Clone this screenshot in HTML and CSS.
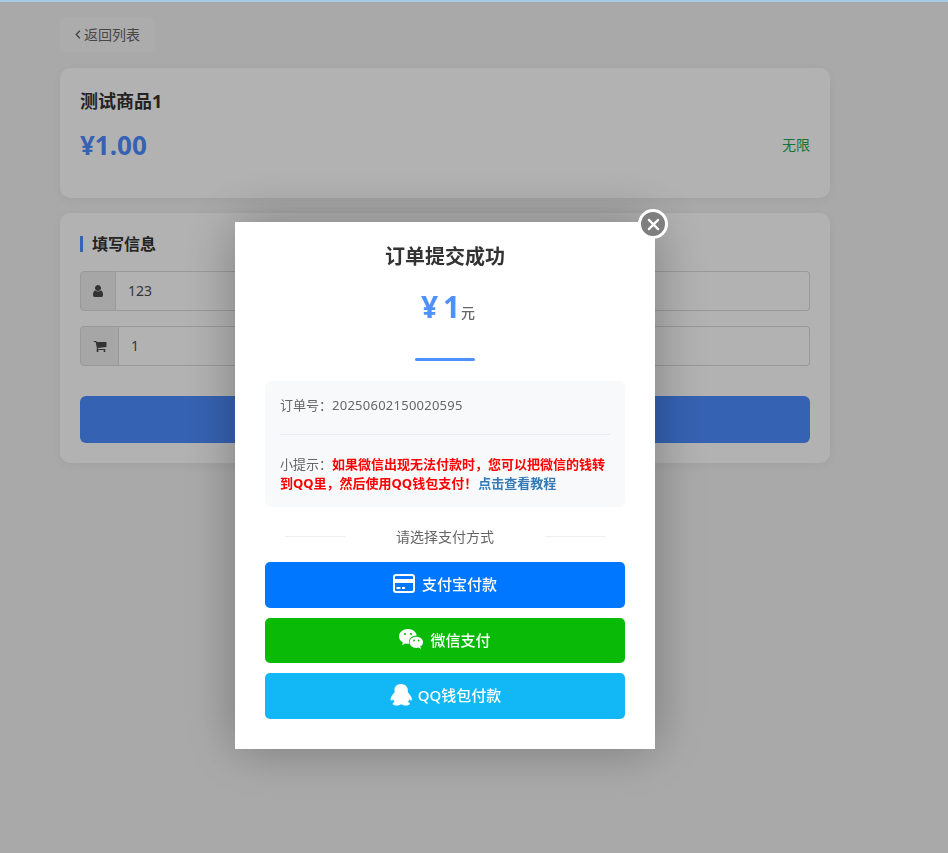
FILE: index.html
```html
<!DOCTYPE html>
<html lang="zh">
<head>
<meta charset="utf-8">
<title>订单提交成功</title>
<link rel="stylesheet" href="styles.css">
</head>
<body>
<div class="topline"></div>
<main class="page">
  <a class="back"><svg class="chev" viewBox="0 0 6 9"><path d="M4.800 .8L1.300 4.500l3.500 3.700"/></svg>返回列表</a>
  <section class="card product">
    <h1 class="product-name">测试商品1</h1>
    <div class="price-row">
      <span class="price">¥1.00</span>
      <span class="stock">无限</span>
    </div>
  </section>
  <section class="card form">
    <h2 class="section-title">填写信息</h2>
    <div class="field">
      <span class="prepend user">
        <svg class="fa" viewBox="0 0 1792 1792"><path d="M1536 1399q0 109-62.5 187t-150.5 78h-854q-88 0-150.5-78t-62.5-187q0-85 8.5-160.5t31.5-152 58.5-131 94-89 134.5-34.5q131 128 313 128t313-128q76 0 134.5 34.5t94 89 58.5 131 31.5 152 8.5 160.5zm-256-887q0 159-112.5 271.5t-271.5 112.5-271.5-112.5-112.5-271.5 112.5-271.5 271.5-112.5 271.5 112.5 112.5 271.5z"/></svg>
      </span>
      <input class="control" value="123">
    </div>
    <div class="field">
      <span class="prepend cart">
        <svg class="fa" viewBox="0 0 1792 1792"><path d="M704 1536q0 52-38 90t-90 38-90-38-38-90 38-90 90-38 90 38 38 90zm896 0q0 52-38 90t-90 38-90-38-38-90 38-90 90-38 90 38 38 90zm128-1088v512q0 24-16.5 43.5t-40.5 22.5l-1044 122q13 60 13 70 0 16-24 64h920q26 0 45 19t19 45-19 45-45 19h-1024q-26 0-45-19t-19-45q0-11 8-31.5t16-36 21.5-40 15.5-29.5l-177-823h-204q-26 0-45-19t-19-45 19-45 45-19h256q16 0 28.5 6.5t19.5 15.5 13 24.5 8 26 5.5 29.5 4.5 26h1201q26 0 45 19t19 45z"/></svg>
      </span>
      <input class="control" value="1">
    </div>
    <button class="submit">提交订单</button>
  </section>
</main>

<div class="overlay"></div>

<div class="modal">
  <button class="close" aria-label="关闭">
    <svg viewBox="0 0 14 14"><path d="M2 2l10 10M12 2L2 12"/></svg>
  </button>
  <h3 class="modal-title">订单提交成功</h3>
  <div class="amount"><b>¥ 1</b><small>元</small></div>
  <div class="rule"></div>
  <div class="info">
    <p class="order">订单号：<span class="num">20250602150020595</span></p>
    <hr class="sep">
    <p class="tip">小提示：<strong>如果微信出现无法付款时，您可以把微信的钱转到QQ里，然后使用QQ钱包支付！</strong><a>点击查看教程</a></p>
  </div>
  <div class="choose"><span>请选择支付方式</span></div>
  <div class="pays">
    <a class="pay alipay">
      <svg class="ico card-ico" viewBox="0 0 22 19"><rect x="1" y="1" width="20" height="17" rx="2.2" fill="none" stroke="#fff" stroke-width="2"/><rect x="1" y="5" width="20" height="4" fill="#fff"/><rect x="3.500" y="13" width="4" height="2" fill="#fff"/><rect x="9" y="13" width="3" height="2" fill="#fff"/></svg>
      支付宝付款
    </a>
    <a class="pay wechat">
      <svg class="ico wx-ico" viewBox="0 0 24 20"><path fill="#fff" d="M9 0c4.600 0 8.400 2.900 8.700 6.600C13.600 6.500 10 9.300 10 13c0 .6.100 1.100.3 1.700-.5.100-.9.100-1.300.1-1 0-1.900-.1-2.800-.4L3 16.200l.9-2.800C1.500 12 0 9.900 0 7.400 0 3.300 4 0 9 0z"/><path fill="#fff" d="M17.300 7.800c3.700 0 6.700 2.400 6.700 5.400 0 1.800-1.100 3.300-2.700 4.400l.7 2.400-2.700-1.400c-.7.2-1.300.3-2 .3-3.700 0-6.700-2.500-6.700-5.700 0-3 3-5.400 6.700-5.400z"/><circle cx="6" cy="5" r="1.100" fill="#09bb07"/><circle cx="12" cy="5" r="1.100" fill="#09bb07"/><circle cx="15" cy="11.500" r=".9" fill="#09bb07"/><circle cx="19.600" cy="11.500" r=".9" fill="#09bb07"/></svg>
      微信支付
    </a>
    <a class="pay qq">
      <svg class="ico qq-ico" viewBox="0 0 22 22" preserveAspectRatio="none"><path fill="#fff" d="M11 0c3.900 0 6.300 2.900 6.300 6.600 0 .6 0 1.200-.1 1.600 1.100 1.200 2.500 3 3.200 4.700.8 1.900.7 3.600.1 3.700-.5.100-1.200-.5-1.800-1.400-.2 1-.8 2-1.500 2.700 1 .4 1.900 1 1.900 1.800 0 1.100-1.800 1.800-3.800 1.800-1.300 0-2.600-.4-3.300-1-.2 0-.5 0-.8 0s-.6 0-.8 0c-.7.600-2 1-3.300 1-2 0-3.800-.7-3.800-1.800 0-.8.900-1.400 1.900-1.800-.7-.7-1.300-1.700-1.500-2.700-.6.900-1.300 1.500-1.800 1.400-.6-.1-.7-1.800.1-3.700.7-1.700 2.100-3.500 3.200-4.700-.1-.4-.1-1-.1-1.600C4.700 2.900 7.100 0 11 0z"/></svg>
      QQ钱包付款
    </a>
  </div>
</div>
</body>
</html>
```

FILE: styles.css
```css
* { box-sizing: border-box; }
html, body { margin: 0; height: 100%; }
body {
  background: #f3f3f3;
  font-family: "Noto Sans", "Noto Sans CJK SC", sans-serif;
  font-size: 14px;
  color: #333;
  overflow: hidden;
}
.topline {
  position: fixed; top: 0; left: 0; right: 0; height: 2px;
  background: #a6cbe3; z-index: 30;
}
.page { width: 770px; margin-left: 60px; padding-top: 18px; }
.back {
  display: flex; align-items: center; width: 95px; height: 34px; padding: 0 0 2px 15px;
  background: #f6f7f8; border-radius: 6px; color: #666; font-size: 14px;
}
.chev { width: 6px; height: 9px; margin-right: 3px; fill: none; stroke: #666; stroke-width: 1.400; }
.card {
  background: #fff; border-radius: 10px; padding: 20px;
  box-shadow: 0 2px 12px rgba(0,0,0,.06);
}
.product { height: 130px; margin-top: 16px; }
.product-name { margin: 0; font-size: 18px; line-height: 27px; font-weight: 700; color: #333; }
.price-row { display: flex; justify-content: space-between; align-items: center; margin-top: 12px; }
.price { font-size: 26px; line-height: 36px; font-weight: 700; color: #4d8dff; }
.stock { color: #28a745; font-size: 14px; margin-bottom: 2px; }
.form { height: 250px; margin-top: 15px; }
.section-title {
  margin: 0 0 16px; font-size: 16px; line-height: 22px; font-weight: 700; color: #333;
  display: flex; align-items: center;
}
.section-title::before {
  content: ""; width: 3px; height: 16px; background: #4d8dff; margin-right: 9px;
}
.field { display: flex; height: 40px; margin-bottom: 15px; }
.prepend {
  display: flex; align-items: center; justify-content: center;
  background: #eeeeee; border: 1px solid #dcdcdc; border-radius: 4px 0 0 4px;
}
.user { width: 36px; }
.cart { width: 39px; }
.fa { width: 14px; height: 14px; fill: #4a4a4a; }
.control {
  flex: 1; min-width: 0; height: 40px; border: 1px solid #dcdcdc; border-left: 0;
  border-radius: 0 4px 4px 0; padding: 0 12px 2px; background: #fff; color: #495057;
  font: 14px "Noto Sans", "Noto Sans CJK SC", sans-serif; outline: 0;
}
.submit {
  display: block; width: 100%; height: 47px; margin-top: 30px; border: 0; border-radius: 6px;
  background: #4d8dff; color: #fff; font: 700 16px "Noto Sans CJK SC", sans-serif;
}
.overlay { position: fixed; inset: 0; background: rgba(0,0,0,.3); z-index: 10; }
.modal {
  position: fixed; left: 235px; top: 222px; width: 420px; height: 527px;
  background: #fff; z-index: 20; padding: 0 30px;
  box-shadow: 0 0 50px rgba(0,0,0,.3);
}
.close {
  position: absolute; right: -13px; top: -13px; width: 30px; height: 30px; padding: 0;
  border-radius: 50%; border: 3px solid #fff; background: #7f7f7f;
  display: flex; align-items: center; justify-content: center;
}
.close svg { width: 13px; height: 13px; fill: none; stroke: #fff; stroke-width: 2.400; stroke-linecap: round; }
.modal-title {
  margin: 0; padding-top: 20px; text-align: center;
  font-size: 20px; line-height: 30px; font-weight: 700; color: #333;
}
.amount { margin-top: 12px; padding-left: 6px; text-align: center; color: #4d90fe; line-height: 46px; height: 46px; }
.amount b { font-size: 30px; font-weight: 700; word-spacing: -3px; }
.amount small { font-size: 14px; color: #666; font-weight: 500; margin-left: 1px; }
.rule { width: 60px; height: 3px; background: #4d90fe; border-radius: 2px; margin: 28px auto 0; }
.info { margin-top: 20px; height: 126px; background: #f8f9fb; border-radius: 6px; padding: 15px; font-size: 13px; color: #666; }
.order { margin: 0; line-height: 19px; }
.num { letter-spacing: .25px; }
.sep { border: 0; border-top: 1px solid #eaecef; margin: 19px 0 20px; }
.tip { margin: 0; line-height: 19px; }
.tip strong { color: #f00; font-weight: 700; }
.tip a { color: #337ab7; font-weight: 700; margin-left: 1px; }
.choose {
  display: flex; align-items: center; justify-content: center; margin-top: 19px; height: 20px;
  font-size: 14px; color: #666;
}
.choose span { width: 200px; text-align: center; }
.choose::before, .choose::after { content: ""; width: 60px; height: 1px; margin-top: 1px; background: #eee; }
.pays { display: flex; flex-direction: column; gap: 10px; margin-top: 16px; }
.pay {
  display: flex; align-items: center; justify-content: center; height: 45.6px; padding-bottom: 2px;
  border-radius: 5px; color: #fff; font-size: 15px; font-weight: 500;
}
.ico { margin-right: 7px; }
.card-ico { width: 22px; height: 19px; }
.wx-ico { width: 24px; height: 20px; margin-right: 7px; }
.qq-ico { width: 24px; height: 22px; margin-right: 5px; }
.alipay { background: #0077ff; }
.wechat { background: #09bb07; }
.qq { background: #12b7f5; }
```
